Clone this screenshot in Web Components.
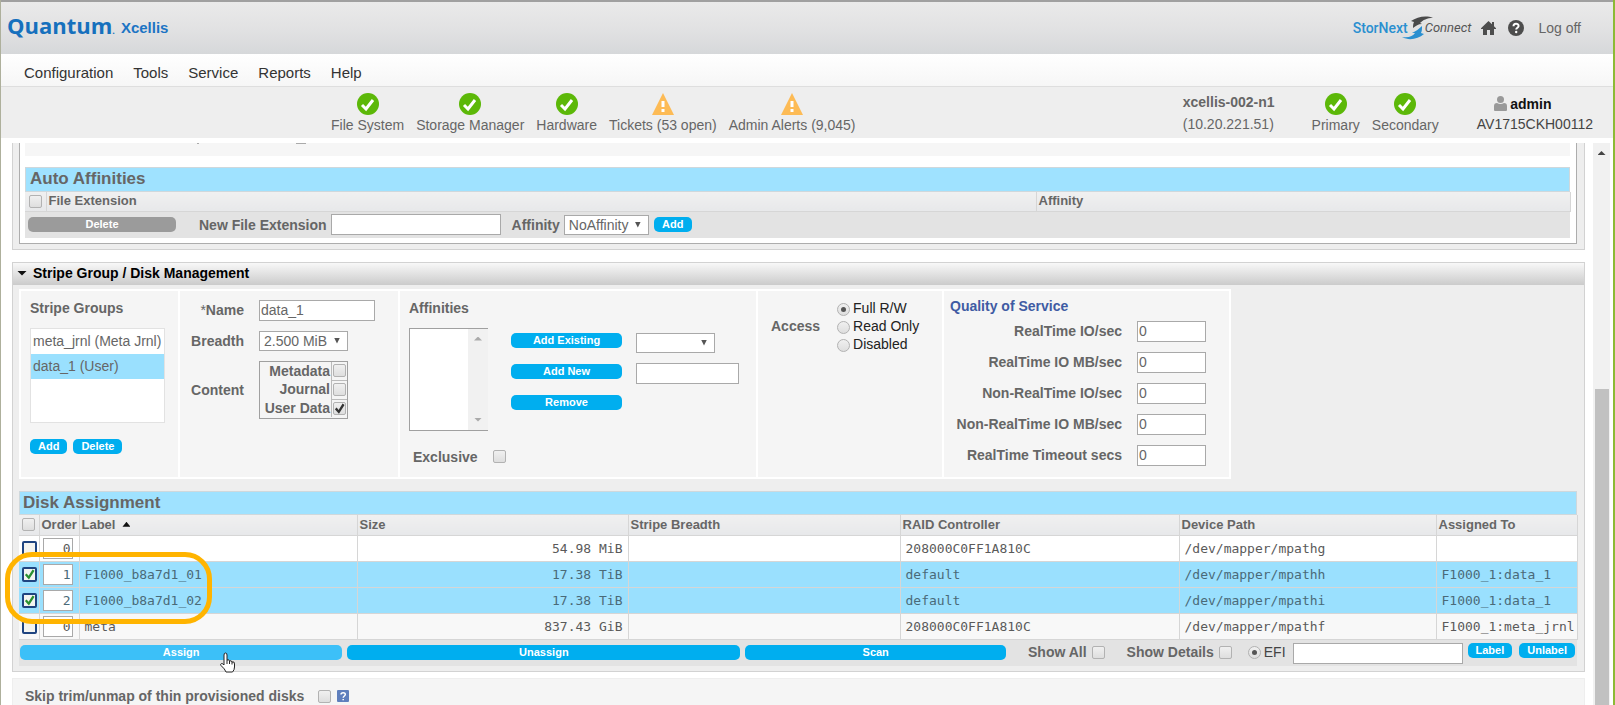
<!DOCTYPE html>
<html lang="en">
<head>
<meta charset="utf-8">
<title>Quantum Xcellis</title>
<style>
html,body{margin:0;height:100%;overflow:hidden;background:#fff}
body{font:14px/16px "Liberation Sans",Arial,sans-serif;color:#666}
</style>
</head>
<body>
<xc-app></xc-app>
<script>
const base = `
*{box-sizing:border-box}
:host{display:block}
input,select,button{font:inherit;color:inherit;margin:0}
.b{font-weight:bold}
input[type=text],select{height:21px;border:1px solid #a9a9a9;background:#fff;padding:0 1px;border-radius:0;outline:0;min-width:0}
select{appearance:none;height:20px;padding:0 4px;display:block;width:100%}
.sel{display:block;position:relative}
.sel::after{content:"";position:absolute;right:8px;top:7px;width:6px;height:6px;background:#555;clip-path:polygon(0 0,100% 0,50% 100%);pointer-events:none}
input[type=checkbox],input[type=radio]{appearance:none;width:13px;height:13px;flex:none;display:block;border:1px solid #b2b2b2;border-radius:2px;background:linear-gradient(#f0f0f0,#dedede)}
input[type=radio]{border-radius:50%;padding:3px}
input[type=radio]:checked::after{content:"";display:block;width:5px;height:5px;border-radius:50%;background:#555}
input[type=checkbox]:checked::after{content:"";display:block;width:11px;height:11px;background:var(--tick,#333);clip-path:polygon(8% 55%,24% 40%,42% 62%,78% 4%,96% 16%,45% 96%)}
h2{margin:0;font-size:17px;line-height:22px;height:25px;background:#9fe2ff;border:1px solid #cfd8dc;padding-left:4px}
table{border-collapse:collapse;table-layout:fixed;width:100%}
th{font-size:13px;line-height:16px;text-align:left;padding:0 2px;background:linear-gradient(#f0f0f0,#e7e8ea);white-space:nowrap}
th,td{border:1px solid #d6d6d6;border-width:0 1px 1px 0}
`;
function define(name, css, html){
  customElements.define(name, class extends HTMLElement{
    constructor(){
      super();
      const t=document.createElement('template');
      t.innerHTML=`<style>${base}${css}</style>${typeof html==='function'?html(this):html}`;
      this.attachShadow({mode:'open'}).append(t.content.cloneNode(true));
    }
  });
}

define('xc-button',`
button{display:block;width:100%;height:15px;padding:0 8px;border:0;border-radius:5px;background:var(--bg,#00aeef);color:#fff;font:bold 11px/15px "Liberation Sans",Arial,sans-serif;white-space:nowrap}
`,'<button type="button"><slot></slot></button>');

define('xc-header',`
:host{display:flex;align-items:center;height:54px;padding:0 32px 0 6px;background:linear-gradient(#eaeaea,#e2e2e3 50%,#d6d8da);border-top:2px solid #a0a0a0}
.q{font:bold 22px/28px "Open Sans",sans-serif;color:#1670bd}
.q small{font-size:9px}
.x{font-size:15px;font-weight:bold;color:#1c74c4;margin-left:6px}
nav{margin-left:auto;display:flex;align-items:center}
svg{display:block}
a{color:#666;text-decoration:none}
.sn{display:flex;align-items:center;font:500 14px/18px Roboto,sans-serif;color:#2a8fd0;margin-right:10px}
.sn i{font-size:13px;font-weight:400;color:#555}
.sn svg{margin:0 -9px 0 -6px}
.h{margin-right:12px}.k{margin-right:14px}
`,`<span class="q">Quantum<small>.</small></span><span class="x">Xcellis</span>
<nav><a class="sn" href="#" aria-label="StorNext Connect">StorNext<svg width="32" height="24" viewBox="0 0 32 24"><path fill="#4a4a4a" d="M11 12C11 10 11 8 12 6L9 5C15 1 24 -1 31 2C25 2 21 4 18 7L20 8C16 8 14 10 11 12Z"/><path fill="#2a8fd0" d="M20 10C20 13 20 15 19 17L22 18C16 23 7 25 0 21C7 22 11 20 13 17L10 17C14 15 17 13 20 10Z"/></svg><i>Connect</i></a>
<a class="h" href="#" aria-label="Home"><svg width="15" height="14" viewBox="0 0 15 14"><path fill="#4d4d4d" d="M7.500 0L11 3.300V1H13V5.200L15 7.200V8H13V14H9V9H6V14H2V8H0V7.200Z"/></svg></a>
<a class="k" href="#" aria-label="Help"><svg width="16" height="16" viewBox="0 0 16 16"><circle cx="8" cy="8" r="8" fill="#4d4d4d"/><path d="M5.500 6.200C5.500 3 10.600 3 10.600 6C10.600 7.800 8.200 7.800 8.200 9.600" fill="none" stroke="#fff" stroke-width="2"/><circle cx="8.200" cy="12" r="1.200" fill="#fff"/></svg></a>
<a href="#">Log off</a></nav>`);

define('xc-menu',`
:host{display:flex;align-items:center;gap:20px;height:33px;padding:6px 0 0 23px;background:linear-gradient(#fff,#f6f6f6);border-bottom:1px solid #dedede;font-size:15px;line-height:18px}
a{color:#333;text-decoration:none}
`,['Configuration','Tools','Service','Reports','Help'].map(t=>`<a href="#">${t}</a>`).join(''));

define('xc-status',`
:host{display:flex;flex-direction:column;align-items:center;gap:2px;white-space:nowrap}
svg{display:block}
`,el=>(el.hasAttribute('warn')
 ?'<svg width="22" height="22" viewBox="0 0 22 22"><path fill="#fdbb55" d="M11 0L22 22H0Z"/><path stroke="#fff" stroke-width="3" d="M11 8V14M11 16V19"/></svg>'
 :'<svg width="22" height="22" viewBox="0 0 22 22"><circle cx="11" cy="11" r="11" fill="#5cb808"/><path fill="none" stroke="#fff" stroke-width="3" d="M5 12L9 16L16 7"/></svg>')+'<slot></slot>');

define('xc-statusbar',`
:host{display:flex;align-items:flex-start;height:51px;padding:6px 20px 0 330px;background:#eee;white-space:nowrap}
.l,.r{display:flex;gap:12px}
.host{margin:1px 37px 0 auto}
.host div+div{margin-top:6px}
.u div+div{margin-top:4px}
.u{margin:3px 0 0 38px;text-align:center;color:#444}
.u b{color:#111}
.u .n{display:flex;justify-content:center;gap:3px;margin-right:24px;margin-left:0}
`,`<div class="l"><xc-status>File System</xc-status><xc-status>Storage Manager</xc-status><xc-status>Hardware</xc-status><xc-status warn>Tickets (53 open)</xc-status><xc-status warn>Admin Alerts (9,045)</xc-status></div>
<div class="host"><div class="b">xcellis-002-n1</div><div>(10.20.221.51)</div></div>
<div class="r"><xc-status>Primary</xc-status><xc-status>Secondary</xc-status></div>
<div class="u"><div class="n"><svg width="13" height="15" viewBox="0 0 13 15"><circle cx="6.500" cy="3.500" r="3.500" fill="#999"/><path fill="#999" d="M0 14V10Q0 7 3 7Q6.500 9 10 7Q13 7 13 10V14Q13 15 12 15H1Q0 15 0 14Z"/></svg><b>admin</b></div><div>AV1715CKH00112</div></div>`);

define('xc-auto',`
:host{border:1px solid #d2d2d2;border-top:0;background:#eee;padding:0 7px 5px 6px}
.in{border:1px solid #adadad;border-top:0;background:#fff;padding:0 6px 5px 5px}
.strip{height:13px;background:#f6f6f6;margin-bottom:11px;display:flex;gap:97px;padding-left:172px}
.strip i{width:2px;height:1px;background:#aaa}.strip i+i{width:10px}
tr{height:19px}
th:first-child{padding-left:4px}
.foot{display:flex;align-items:center;height:26px;background:#e3e3e3;padding-left:3px}
.foot xc-button{width:148px;--bg:#9b9b9b}
.foot .n{margin-left:23px}
.foot input{width:170px;margin-left:4px}
.foot .a{margin:0 4px 0 11px}
.foot .sel{width:85px}
.foot .add{width:38px;margin-left:5px;--bg:#00aeef}
`,`<div class="in"><div class="strip"><i></i><i></i></div><h2>Auto Affinities</h2>
<table><colgroup><col style="width:21px"><col style="width:990px"><col style="width:534px"></colgroup><tr><th><input type="checkbox" aria-label="Select all extensions"></th><th>File Extension</th><th>Affinity</th></tr></table>
<div class="foot"><xc-button>Delete</xc-button><label class="b n" for="ne">New File Extension</label><input type="text" id="ne"><label class="b a" for="af">Affinity</label><span class="sel"><select id="af"><option>NoAffinity</option></select></span><xc-button class="add">Add</xc-button></div></div>`);

define('xc-section',`
:host{margin-top:12px;border:1px solid #d2d2d2;background:#eee}
header{display:flex;align-items:center;gap:6px;height:22px;padding:0 0 1px 4px;background:linear-gradient(#f8f8f8,#cbcbcb);color:#000;font-weight:bold}
header i{width:10px;height:5px;background:#111;clip-path:polygon(0 0,100% 0,50% 100%)}
.c{padding:4px 7px 5px 6px}
`,'<header><i></i><slot name="title"></slot></header><div class="c"><slot></slot></div>');

define('xc-stripe',`
:host{display:flex;gap:2px;width:fit-content;height:190px;border:2px solid #fff;background:#fff;margin-bottom:12px}
section{background:#f5f5f5;padding:0 9px}
.g1{width:157px}.g2{width:218px}.g3{width:356px}.g4{width:184px}.g5{width:285px}
.t{margin:9px 0 12px}
ul{list-style:none;margin:0;padding:0;width:135px;height:95px;background:#fff;border:1px solid #e2e2e2;line-height:24px;white-space:nowrap}
li{height:25px;padding-left:2px}
.on{background:#9ae0fe}
.row{display:flex}
.g1 .row{gap:6px;margin-top:16px}
.g2{display:grid;grid-template-columns:54px 89px;column-gap:15px;row-gap:10px;align-content:start;align-items:center;justify-items:end;padding:9px 0 0 10px}
.g2>:nth-child(even){justify-self:start}
.g2 input[type=text]{width:116px}
.g2 .sel{width:89px}
.box{width:89px;height:58px;border:1px solid #a0a0a0;display:grid;grid-template-rows:repeat(3,1fr);line-height:18px}
.box label{display:grid;grid-template-columns:1fr 17px;text-align:right;font-weight:bold;align-items:center}
.box span{display:flex;align-items:center;padding-left:1px;height:100%;margin-left:1px;border-left:1px solid #bbb}
.box label+label span{border-top:1px solid #bbb}
.aff{display:flex}
.lb{width:79px;height:103px;background:#fff;border:1px solid #a0a0a0;border-right:0;display:flex;justify-content:flex-end}
.lb div{background:#f1f1f1;width:20px;display:flex;flex-direction:column;justify-content:space-between;align-items:center;padding:8px 0}
.lb i{width:8px;height:4px;background:#aaa;clip-path:polygon(50% 0,100% 100%,0 100%)}
.lb i+i{clip-path:polygon(0 0,100% 0,50% 100%)}
.bt{width:111px;margin:5px 14px 0 23px;display:flex;flex-direction:column;gap:16px}
.ad{margin-top:5px}
.ad .sel{width:79px}
.ad input{display:block;width:103px;margin-top:10px}
.ex{display:flex;gap:15px;align-items:center;margin:18px 0 0 4px}
.g4{display:flex;gap:17px;padding-left:13px;padding-top:9px}
.g4 .b{margin-top:18px}
.g4 label{display:flex;align-items:center;gap:3px;line-height:17px;height:17px;color:#222;margin-bottom:1px;white-space:nowrap}
.g4 label input{margin-top:2px}
.g5{padding:7px 23px 0 6px}
.g5 .q{color:#3f5ba3;margin-bottom:7px}
.g5 label{display:flex;justify-content:flex-end;align-items:center;gap:15px;margin-bottom:10px;font-weight:bold;height:21px}
.g5 input{width:69px;font-weight:normal}
`,`<section class="g1"><div class="b t">Stripe Groups</div><ul><li>meta_jrnl (Meta Jrnl)</li><li class="on">data_1 (User)</li></ul><div class="row"><xc-button>Add</xc-button><xc-button>Delete</xc-button></div></section>
<section class="g2"><label for="nm">*<b>Name</b></label><input type="text" id="nm" value="data_1"><label class="b" for="br">Breadth</label><span class="sel"><select id="br"><option>2.500 MiB</option></select></span><span class="b">Content</span><div class="box"><label>Metadata<span><input type="checkbox"></span></label><label>Journal<span><input type="checkbox"></span></label><label>User Data<span><input type="checkbox" checked></span></label></div></section>
<section class="g3"><div class="b t">Affinities</div><div class="aff"><div class="lb"><div><i></i><i></i></div></div><div class="bt"><xc-button>Add Existing</xc-button><xc-button>Add New</xc-button><xc-button>Remove</xc-button></div><div class="ad"><span class="sel"><select aria-label="Existing affinity"><option></option></select></span><input type="text" aria-label="New affinity"></div></div><label class="ex b">Exclusive<input type="checkbox"></label></section>
<section class="g4"><span class="b">Access</span><div><label><input type="radio" name="a" checked>Full R/W</label><label><input type="radio" name="a">Read Only</label><label><input type="radio" name="a">Disabled</label></div></section>
<section class="g5"><div class="b q">Quality of Service</div>${['RealTime IO/sec','RealTime IO MB/sec','Non-RealTime IO/sec','Non-RealTime IO MB/sec','RealTime Timeout secs'].map(t=>`<label>${t}<input type="text" value="0"></label>`).join('')}</section>`);

const disks=[
 [0,0,'','54.98 MiB','208000C0FF1A810C','/dev/mapper/mpathg',''],
 [1,1,'F1000_b8a7d1_01','17.38 TiB','default','/dev/mapper/mpathh','F1000_1:data_1'],
 [1,2,'F1000_b8a7d1_02','17.38 TiB','default','/dev/mapper/mpathi','F1000_1:data_1'],
 [0,0,'meta','837.43 GiB','208000C0FF1A810C','/dev/mapper/mpathf','F1000_1:meta_jrnl']];
define('xc-disks',`
:host{position:relative}
h2{height:24px;padding-left:3px}
thead tr{height:21px}
tbody tr{height:26px;background:#fff}
tbody tr:last-child{background:#f8f8f8}
tbody tr.on{background:#9ae0fe}
th:first-child{padding-left:3px}
td{font:13px/18px "DejaVu Sans Mono",monospace;padding:0 5px;white-space:nowrap;color:#5a5a5a}
.on td{color:#4a6a78}
td:first-child,td:nth-child(2){padding:0 3px}
td input[type=checkbox]{width:15px;height:15px;border:2px solid #1f4480;background:#f4f4f0;--tick:#2a9030}
td input[type=text]{display:block;width:30px;height:21px;text-align:right}
.up{display:inline-block;width:8px;height:5px;background:#111;clip-path:polygon(50% 0,100% 100%,0 100%);margin:0 0 2px 7px}
.num{text-align:right}
.foot{display:flex;align-items:flex-start;height:26px;background:#e3e3e3;padding:5px 2px 0 1px;line-height:15px;white-space:nowrap}
.w{display:flex;flex:1;gap:5px}
.w :nth-child(1){flex:324 0 0;--bg:#3cc0f8}.w :nth-child(2){flex:395 0 0}.w :nth-child(3){flex:262 0 0}
.foot label{display:flex;align-items:center;gap:5px;height:15px;margin-left:22px}
.foot .efi{gap:3px;margin-left:16px;color:#444}
.foot>input{width:170px;margin:-2px 5px 0 7px}
.end{display:flex;gap:7px;margin-top:-2px}
.ring{position:absolute;left:-14px;top:61px;width:207px;height:72px;border:5px solid #ffb400;border-radius:27px}
.cur{position:absolute;left:200px;top:161px}
`,`<h2>Disk Assignment</h2>
<table><colgroup>${[20,40,278,271,272,279,257,141].map(w=>`<col style="width:${w}px">`).join('')}</colgroup>
<thead><tr><th><input type="checkbox" aria-label="Select all disks"></th><th>Order</th><th>Label<i class="up"></i></th><th>Size</th><th>Stripe Breadth</th><th>RAID Controller</th><th>Device Path</th><th>Assigned To</th></tr></thead>
<tbody>${disks.map(d=>`<tr${d[0]?' class="on"':''}><td><input type="checkbox" aria-label="Select disk"${d[0]?' checked':''}></td><td><input type="text" aria-label="Order" value="${d[1]}"></td><td>${d[2]}</td><td class="num">${d[3]}</td><td></td><td>${d[4]}</td><td>${d[5]}</td><td>${d[6]}</td></tr>`).join('')}</tbody></table>
<div class="foot"><div class="w"><xc-button>Assign</xc-button><xc-button>Unassign</xc-button><xc-button>Scan</xc-button></div>
<label class="b">Show All<input type="checkbox"></label><label class="b">Show Details<input type="checkbox"></label><label class="efi"><input type="radio" checked>EFI</label><input type="text" aria-label="Disk label"><div class="end"><xc-button>Label</xc-button><xc-button>Unlabel</xc-button></div></div>
<div class="ring"></div>
<svg class="cur" width="18" height="22" viewBox="0 0 18 22"><path d="M5 13V3Q5 1 6.500 1Q8 1 8 3V8Q10 7 10.500 9Q12.500 8 13 10Q15.500 9 15.500 12V15Q15.500 18 13.500 20H7Q6 17 2 13.500Q1 12 2.500 11.500Q4 11.500 5 13Z" fill="#fff" stroke="#222" stroke-width="1"/><path d="M8 8V12M10.500 9V12M13 10V12.500" stroke="#222" fill="none"/></svg>`);

define('xc-skip',`
:host{margin-top:6px;background:#f5f5f5;border:1px solid #eee;height:36px}
label{display:flex;align-items:center;gap:14px;padding:9px 0 0 12px;font-weight:bold}
label svg{margin-left:-8px}
`,'<label>Skip trim/unmap of thin provisioned disks<input type="checkbox"><svg width="12" height="12" viewBox="0 0 12 12"><rect width="12" height="12" rx="1" fill="#5f7fbd"/><path d="M4 4.500C4 2 8.500 2 8.300 4.500C8.200 6 6.200 6 6.200 7.800M6.200 9V10.300" stroke="#fff" stroke-width="1.500" fill="none"/></svg></label>');

define('xc-scroll',`
:host{width:17px;background:#f1f1f1;flex:none;display:flex;flex-direction:column;align-items:center}
.up{width:8px;height:4px;background:#444;margin-top:8px;clip-path:polygon(50% 0,100% 100%,0 100%)}
.gap{flex:234}.thumb{flex:316;width:14px;background:#c1c1c1}
`,'<div class="up"></div><div class="gap"></div><div class="thumb"></div>');

define('xc-app',`
:host{display:flex;flex-direction:column;height:100vh;overflow:hidden;border-left:1px solid #aeb09c;border-right:2px solid #8cba35;background:#fff}
main{flex:1;min-height:0;display:flex;margin-top:5px;padding-right:3px}
.c{flex:1;min-width:0;margin:0 8px 0 11px;overflow:clip;overflow-clip-margin:8px}
`,`<xc-header></xc-header><xc-menu></xc-menu><xc-statusbar></xc-statusbar>
<main><div class="c"><xc-auto></xc-auto><xc-section><span slot="title">Stripe Group / Disk Management</span><xc-stripe></xc-stripe><xc-disks></xc-disks></xc-section><xc-skip></xc-skip></div><xc-scroll></xc-scroll></main>`);
</script>
</body>
</html>
